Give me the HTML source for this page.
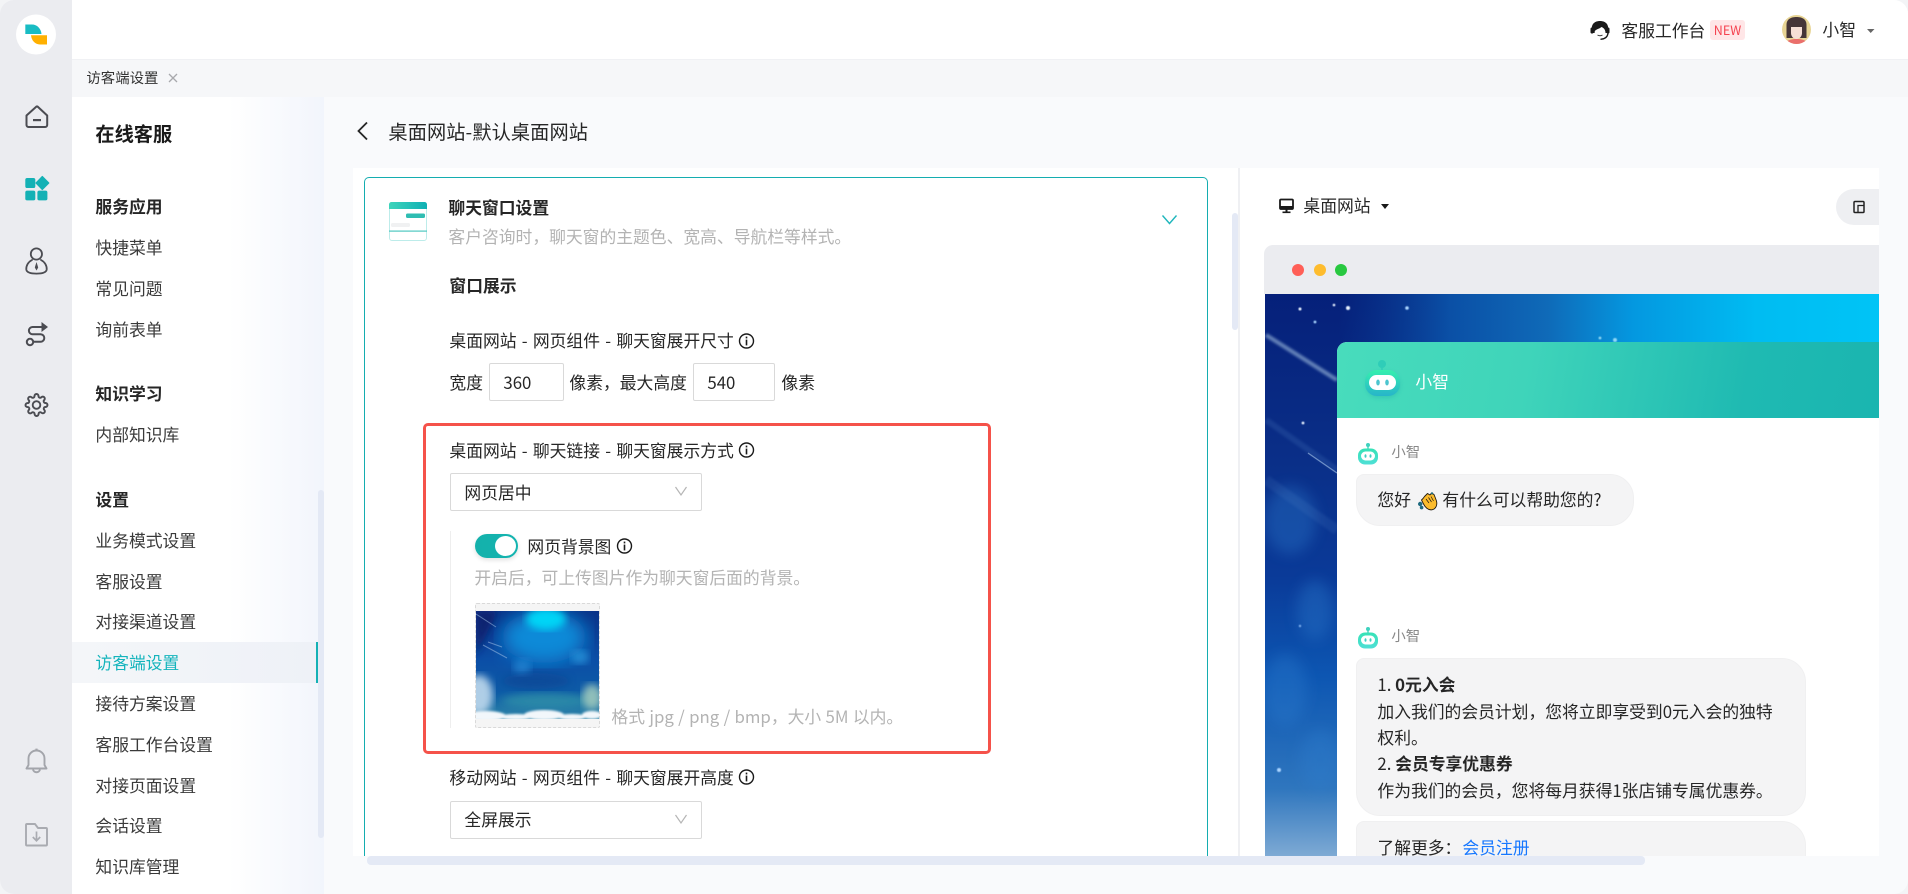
<!DOCTYPE html>
<html lang="zh-CN">
<head>
<meta charset="utf-8">
<title>访客端设置</title>
<style>
*{box-sizing:border-box;margin:0;padding:0}
html,body{width:1908px;height:894px;overflow:hidden;background:#f3f4f6}
body{font-family:"Noto Sans CJK SC","Liberation Sans",sans-serif;font-size:16.8px;color:#262626}
#app{position:absolute;left:0;top:0;width:1908px;height:894px;overflow:hidden;border-radius:14px;background:#f9fafc}
.a{position:absolute}
.t{position:absolute;white-space:nowrap;line-height:24px;height:24px;margin:-.6px 0 0 -.6px}
.w{word-spacing:1.5px}
.b{font-weight:700}
.g{color:#b3b3b3}
.s{color:#3a3a3a}
.box{position:absolute;background:#fff;border:1px solid #d9d9d9;border-radius:2px}
svg.o{position:absolute;left:0;top:0;width:1908px;height:894px;pointer-events:none}
</style>
</head>
<body>
<div id="app">
  <!-- top bar -->
  <div class="a" style="left:72px;top:0;width:1836px;height:60px;background:#fff;border-bottom:1px solid #f0f1f4"></div>
  <div class="a" style="left:72px;top:60px;width:1836px;height:37px;background:#f6f7f9"></div>
  <div class="t" style="left:87px;top:67px;font-size:14.4px;color:#333">访客端设置</div>
  <div class="t" style="left:1622px;top:19px">客服工作台</div>
  <div class="a" style="left:1710px;top:20px;width:35px;height:20px;background:#ffe6e7;border-radius:3px;color:#f5424f;font-size:12.5px;line-height:20px;text-align:center">NEW</div>
  <div class="t" style="left:1823px;top:18px">小智</div>

  <!-- rail -->
  <div class="a" style="left:0;top:0;width:72px;height:894px;background:#ebecf0"></div>

  <!-- sidebar -->
  <div class="a" style="left:72px;top:97px;width:252px;height:797px;background:linear-gradient(90deg,#fff 0,#fff 62%,#f2f5fc 100%)"></div>
  <div class="a" style="left:72px;top:642px;width:246px;height:41px;background:linear-gradient(90deg,#f4f6f9,#eef1f7)"></div>
  <div class="a" style="left:316px;top:642px;width:2px;height:41px;background:#14b1b5"></div>
  <div class="a" style="left:318px;top:490px;width:6px;height:348px;background:#e4e9f5;border-radius:3px"></div>
  <div class="t b" style="left:96px;top:122px;font-size:19.2px;color:#1a1a1a">在线客服</div>
  <div class="t b" style="left:96px;top:195px;color:#262626">服务应用</div>
  <div class="t s" style="left:96px;top:236px">快捷菜单</div>
  <div class="t s" style="left:96px;top:277px">常见问题</div>
  <div class="t s" style="left:96px;top:318px">询前表单</div>
  <div class="t b" style="left:96px;top:382px;color:#262626">知识学习</div>
  <div class="t s" style="left:96px;top:423px">内部知识库</div>
  <div class="t b" style="left:96px;top:488px;color:#262626">设置</div>
  <div class="t s" style="left:96px;top:529px">业务模式设置</div>
  <div class="t s" style="left:96px;top:570px">客服设置</div>
  <div class="t s" style="left:96px;top:610px">对接渠道设置</div>
  <div class="t" style="left:96px;top:651px;color:#14b4bc">访客端设置</div>
  <div class="t s" style="left:96px;top:692px">接待方案设置</div>
  <div class="t s" style="left:96px;top:733px">客服工作台设置</div>
  <div class="t s" style="left:96px;top:774px">对接页面设置</div>
  <div class="t s" style="left:96px;top:814px">会话设置</div>
  <div class="t s" style="left:96px;top:855px">知识库管理</div>

  <!-- main title -->
  <div class="t" style="left:389px;top:120px;font-size:19.2px;letter-spacing:.1px">桌面网站-默认桌面网站</div>

  <!-- left panel -->
  <div class="a" style="left:353px;top:168px;width:885px;height:688px;background:#fff;overflow:hidden">
    <div class="a" style="left:11px;top:9px;width:844px;height:679px;border:1.5px solid #14adb0;border-bottom:0;border-radius:5px 5px 0 0"></div>
  </div>
  <div class="a" style="left:1232px;top:213px;width:6px;height:117px;background:#e4e9f5;border-radius:3px"></div>
  <div class="a" style="left:1238px;top:168px;width:2px;height:688px;background:#eff0f3"></div>

  <div class="t b" style="left:449px;top:196px">聊天窗口设置</div>
  <div class="t g" style="left:449px;top:225px">客户咨询时，聊天窗的主题色、宽高、导航栏等样式。</div>
  <div class="t b" style="left:450px;top:274px">窗口展示</div>
  <div class="t w" style="left:450px;top:329px">桌面网站 - 网页组件 - 聊天窗展开尺寸</div>
  <div class="t" style="left:450px;top:371px">宽度</div>
  <div class="box" style="left:489px;top:363px;width:75px;height:38px"></div>
  <div class="t" style="left:504px;top:371px">360</div>
  <div class="t" style="left:570px;top:371px">像素，最大高度</div>
  <div class="box" style="left:693px;top:363px;width:82px;height:38px"></div>
  <div class="t" style="left:708px;top:371px">540</div>
  <div class="t" style="left:782px;top:371px">像素</div>

  <div class="t w" style="left:450px;top:439px">桌面网站 - 聊天链接 - 聊天窗展示方式</div>
  <div class="box" style="left:450px;top:473px;width:252px;height:38px"></div>
  <div class="t" style="left:465px;top:481px">网页居中</div>
  <div class="a" style="left:450px;top:531px;width:1px;height:197px;background:#eeeeee"></div>
  <div class="a" style="left:475px;top:534px;width:43px;height:24px;border-radius:12px;background:linear-gradient(90deg,#14b1ab,#14b4b0);box-shadow:0 2px 5px rgba(0,0,0,.12)"></div>
  <div class="a" style="left:495px;top:536px;width:21px;height:20px;border-radius:50%;background:#fff"></div>
  <div class="t" style="left:528px;top:535px">网页背景图</div>
  <div class="t g" style="left:475px;top:566px">开启后，可上传图片作为聊天窗后面的背景。</div>
  <div class="a" style="left:475px;top:603px;width:125px;height:125px;background:#f5f5f5;border:1px dashed #d9d9d9;border-radius:2px"></div>
  <svg class="a" style="left:476px;top:611px" width="123" height="108" viewBox="0 0 123 108">
    <defs>
      <linearGradient id="tb" x1="0" y1="0" x2="0" y2="1">
        <stop offset="0" stop-color="#0a3388"/>
        <stop offset=".45" stop-color="#0b4ea6"/>
        <stop offset=".75" stop-color="#0d5ba6"/>
        <stop offset="1" stop-color="#2f86a8"/>
      </linearGradient>
      <filter id="f9"><feGaussianBlur stdDeviation="9"/></filter>
      <filter id="f4"><feGaussianBlur stdDeviation="4"/></filter>
      <filter id="f1"><feGaussianBlur stdDeviation="1.1"/></filter>
    </defs>
    <rect width="123" height="108" fill="url(#tb)"/>
    <path d="M0 0H22L0 45z" fill="#07216f" filter="url(#f4)"/>
    <ellipse cx="68" cy="26" rx="42" ry="26" fill="#0a8ad8" filter="url(#f9)"/>
    <ellipse cx="70" cy="8" rx="20" ry="11" fill="#04d4f6" filter="url(#f4)"/>
    <ellipse cx="104" cy="46" rx="9" ry="7" fill="#2a96dc" opacity=".75" filter="url(#f4)"/>
    <ellipse cx="46" cy="56" rx="9" ry="8" fill="#2a90dc" opacity=".6" filter="url(#f4)"/>
    <ellipse cx="60" cy="70" rx="34" ry="8" fill="#083f8e" opacity=".5" filter="url(#f4)"/>
    <ellipse cx="70" cy="90" rx="44" ry="8" fill="#2f8fa8" opacity=".8" filter="url(#f4)"/>
    <ellipse cx="116" cy="86" rx="10" ry="13" fill="#a6cfbe" opacity=".85" filter="url(#f4)"/>
    <ellipse cx="3" cy="84" rx="14" ry="20" fill="#b8d4ea" opacity=".95" filter="url(#f4)"/>
    <g fill="#f2f7fb" filter="url(#f1)">
      <ellipse cx="10" cy="105" rx="20" ry="5"/>
      <ellipse cx="40" cy="106" rx="16" ry="3"/>
      <ellipse cx="68" cy="104" rx="20" ry="5"/>
      <ellipse cx="96" cy="106" rx="14" ry="3"/>
      <ellipse cx="116" cy="104" rx="10" ry="4"/>
    </g>
    <g stroke="#9fc0e6" stroke-width="1" opacity=".55">
      <path d="M0 3L20 16"/>
      <path d="M12 31L26 36"/>
      <path d="M7 34L31 47"/>
    </g>
  </svg>
  <div class="t g" style="left:612px;top:705px;word-spacing:.6px">格式 jpg / png / bmp，大小 5M 以内。</div>

  <div class="t w" style="left:450px;top:766px">移动网站 - 网页组件 - 聊天窗展开高度</div>
  <div class="box" style="left:450px;top:801px;width:252px;height:38px"></div>
  <div class="t" style="left:465px;top:808px">全屏展示</div>

  <!-- red box -->
  <div class="a" style="left:423px;top:423px;width:568px;height:331px;border:3.5px solid #f5524a;border-radius:5px"></div>

  <!-- right panel -->
  <div class="a" style="left:1240px;top:168px;width:639px;height:688px;background:#fff"></div>
  <div class="t" style="left:1304px;top:194px">桌面网站</div>
  <div class="a" style="left:1836px;top:189px;width:43px;height:36px;background:#eeeff2;border-radius:18px 0 0 18px"></div>
  <div class="a" style="left:1264px;top:245px;width:615px;height:49px;background:#ebecf0;border-radius:9px 0 0 0"></div>

  <svg class="a" style="left:1265px;top:294px" width="614" height="562" viewBox="1265 294 614 562">
    <defs>
      <linearGradient id="v" x1="0" y1="0" x2="0" y2="1">
        <stop offset="0" stop-color="#05207a"/>
        <stop offset=".3" stop-color="#0a2f88"/>
        <stop offset=".5" stop-color="#0a3a98"/>
        <stop offset=".68" stop-color="#0d56b2"/>
        <stop offset=".88" stop-color="#2f76be"/>
        <stop offset="1" stop-color="#7eaad4"/>
      </linearGradient>
      <linearGradient id="h" x1="0" y1="0" x2="1" y2="0">
        <stop offset="0" stop-color="#0a4aa0" stop-opacity="0"/>
        <stop offset=".12" stop-color="#0a3f98" stop-opacity="0"/>
        <stop offset=".3" stop-color="#0b52a8" stop-opacity=".95"/>
        <stop offset=".46" stop-color="#0f6ab8"/>
        <stop offset=".6" stop-color="#0498e0"/>
        <stop offset=".8" stop-color="#00bcf2"/>
        <stop offset="1" stop-color="#00c4f6"/>
      </linearGradient>
      <filter id="bl"><feGaussianBlur stdDeviation="1.2"/></filter>
      <filter id="bl2"><feGaussianBlur stdDeviation="7"/></filter>
      <filter id="bl3"><feGaussianBlur stdDeviation=".5"/></filter>
    </defs>
    <rect x="1265" y="294" width="614" height="562" fill="url(#v)"/>
    <rect x="1265" y="294" width="614" height="48" fill="url(#h)"/>
    <g filter="url(#bl2)" fill="#2f7fd0" opacity=".35">
      <ellipse cx="1290" cy="520" rx="26" ry="34"/>
      <ellipse cx="1315" cy="610" rx="18" ry="30"/>
      <ellipse cx="1285" cy="690" rx="22" ry="36"/>
      <ellipse cx="1320" cy="760" rx="20" ry="30"/>
    </g>
    <path d="M1266 335L1337 380" stroke="#8aa8d0" stroke-width="4" opacity=".7" filter="url(#bl)"/>
    <path d="M1308 453L1337 473" stroke="#a8c4e8" stroke-width="1.2" opacity=".65"/>
    <path d="M1266 420L1337 470" stroke="#5c8ccc" stroke-width="6" opacity=".18" filter="url(#bl)"/>
    <path d="M1266 480L1337 530" stroke="#5c8ccc" stroke-width="10" opacity=".14" filter="url(#bl)"/>
    <g fill="#e8f2ff" filter="url(#bl3)">
      <circle cx="1300" cy="309" r="1.5"/><circle cx="1334" cy="305" r="1.3"/><circle cx="1348" cy="308" r="2"/>
      <circle cx="1407" cy="308" r="1.8" fill="#a9d4ff"/><circle cx="1315" cy="322" r="1.4" fill="#a9d4ff"/>
      <circle cx="1303" cy="423" r="1.4"/>
      <circle cx="1279" cy="770" r="2" fill="#a9d4ff"/>
      <circle cx="1300" cy="626" r="1.2" fill="#7fb0f0"/>
      <circle cx="1600" cy="338" r="1.4" fill="#8fd8f4"/><circle cx="1615" cy="340" r="2" fill="#8fd8f4"/>
    </g>
  </svg>

  <!-- chat -->
  <div class="a" style="left:1337px;top:342px;width:542px;height:514px;background:#fff;border-radius:10px 0 0 0;overflow:hidden">
    <div class="a" style="left:0;top:0;width:542px;height:76px;background:linear-gradient(100deg,#48dcbc 0,#3fd4ba 35%,#1fbab2 75%,#1ab5b0 100%)"></div>
    <div class="a" style="left:19px;top:132px;width:278px;height:52px;background:#f4f4f5;border:1px solid #f0f0f1;border-radius:8px 24px 24px 24px"></div>
    <div class="a" style="left:19px;top:316px;width:450px;height:158px;background:#f4f4f5;border:1px solid #f0f0f1;border-radius:8px 24px 24px 24px"></div>
    <div class="a" style="left:19px;top:479px;width:450px;height:35px;background:#f4f4f5;border:1px solid #f0f0f1;border-bottom:0;border-radius:8px 24px 0 0"></div>
  </div>
  <div class="t" style="left:1416px;top:370px;color:#fff">小智</div>
  <div class="t" style="left:1392px;top:441px;font-size:14.4px;color:#888">小智</div>
  <div class="t" style="left:1378px;top:488px">您好</div>
  <div class="t" style="left:1443px;top:488px">有什么可以帮助您的?</div>
  <div class="t" style="left:1392px;top:625px;font-size:14.4px;color:#888">小智</div>
  <div class="t" style="left:1378px;top:673px"><span>1. </span><b>0元入会</b></div>
  <div class="t" style="left:1378px;top:700px">加入我们的会员计划，您将立即享受到0元入会的独特</div>
  <div class="t" style="left:1378px;top:726px">权利。</div>
  <div class="t" style="left:1378px;top:752px"><span>2. </span><b>会员专享优惠券</b></div>
  <div class="t" style="left:1378px;top:779px">作为我们的会员，您将每月获得1张店铺专属优惠券。</div>
  <div class="a" style="left:1340px;top:836px;width:510px;height:20px;overflow:hidden">
    <div class="t" style="left:38px;top:0">了解更多：</div>
    <div class="t" style="left:123px;top:0;color:#1677ff">会员注册</div>
  </div>

  <div class="a" style="left:367px;top:856px;width:1278px;height:9px;background:#e4e9f5;border-radius:4px"></div>

  <!-- icons -->
  <svg class="o" viewBox="0 0 1908 894" fill="none">
    <defs>
      <g id="info">
        <circle cx="8" cy="8" r="7" stroke="#1a1a1a" stroke-width="1.4" fill="#fff"/>
        <rect x="7.2" y="3.6" width="1.6" height="1.8" fill="#1a1a1a"/>
        <rect x="7.2" y="6.6" width="1.6" height="5.8" fill="#1a1a1a"/>
      </g>
      <g id="bot">
        <circle cx="10" cy="2.5" r="2" fill="#3fd2bf"/>
        <rect x="9.3" y="3" width="1.4" height="4" fill="#3fd2bf"/>
        <rect x="0" y="6" width="20" height="16" rx="7" fill="url(#bg1)"/>
        <rect x="3" y="9" width="14" height="9" rx="4.5" fill="#fff"/>
        <ellipse cx="7.5" cy="13.5" rx="1" ry="1.8" fill="#3fcfc4"/>
        <ellipse cx="12.5" cy="13.5" rx="1" ry="1.8" fill="#3fcfc4"/>
      </g>
      <linearGradient id="bg1" x1="0" y1="0" x2="0" y2="1"><stop offset="0" stop-color="#36e2b6"/><stop offset="1" stop-color="#4fdfd6"/></linearGradient>
      <linearGradient id="bg2" x1="0" y1="0" x2="0" y2="1"><stop offset="0" stop-color="#36f0ae"/><stop offset="1" stop-color="#27b4ca"/></linearGradient>
      <linearGradient id="ci" x1="0" y1="0" x2="1" y2="0"><stop offset="0" stop-color="#3ed4bb"/><stop offset="1" stop-color="#0fb0b4"/></linearGradient>
      <filter id="sh" x="-30%" y="-30%" width="160%" height="160%"><feGaussianBlur stdDeviation="2"/></filter>
    </defs>

    <!-- logo -->
    <circle cx="36" cy="34.5" r="20" fill="#fff"/>
    <path d="M25.3 24.5H32C37 24.5 41 28.5 41.5 34H25.3z" fill="#19bcc3"/>
    <path d="M31 35.3H47V44.5H40C35 44.5 31.5 40.5 31 35.3z" fill="#ffb000"/>

    <!-- home -->
    <path d="M26.5 115.5L36.5 106.5Q37 106.2 37.5 106.5L47.2 115.5V125a2 2 0 0 1-2 2H28.5a2 2 0 0 1-2-2z" stroke="#4b4c52" stroke-width="2" stroke-linejoin="round"/>
    <rect x="33" y="119" width="8" height="2.2" fill="#4b4c52"/>
    <!-- apps -->
    <rect x="25.3" y="178" width="10" height="10" rx="1.8" fill="#14b1b5"/>
    <path d="M42.3 176.4L48.9 183L42.3 189.6L35.9 183z" fill="#14b1b5" stroke="#14b1b5" stroke-linejoin="round"/>
    <rect x="25.3" y="190.6" width="10" height="9.8" rx="1.8" fill="#14b1b5"/>
    <rect x="37.4" y="190.6" width="10" height="9.8" rx="1.8" fill="#14b1b5"/>
    <!-- person -->
    <circle cx="36.4" cy="254" r="5.6" stroke="#4b4c52" stroke-width="1.8"/>
    <path d="M32 260C28 262 26 266 26.3 269.5C26.8 273 33 273.6 36.5 273.6C40 273.6 46.2 273 46.7 269.5C47 266 45 262 41 260" stroke="#4b4c52" stroke-width="1.8" stroke-linecap="round"/>
    <path d="M36.5 262L38.2 267.5L36.5 270.5L34.8 267.5z" fill="#4b4c52"/>
    <!-- route -->
    <path d="M42 327H32.5a3.6 3.6 0 0 0 0 7.2H40.5a3.8 3.8 0 0 1 0 7.6H34" stroke="#4b4c52" stroke-width="2"/>
    <path d="M41.5 322L48 327L41.5 332z" fill="#4b4c52"/>
    <circle cx="30" cy="342" r="3.2" stroke="#4b4c52" stroke-width="2"/>
    <!-- gear -->
    <g transform="translate(24.5 393)" stroke="#4b4c52" stroke-width="1.9">
      <circle cx="12" cy="12" r="3.8"/>
      <path d="M19.4 15a1.65 1.65 0 0 0 .33 1.82l.06.06a2 2 0 0 1 0 2.83 2 2 0 0 1-2.83 0l-.06-.06a1.65 1.65 0 0 0-1.82-.33 1.65 1.65 0 0 0-1 1.51V21a2 2 0 0 1-2 2 2 2 0 0 1-2-2v-.09A1.65 1.65 0 0 0 9 19.4a1.65 1.65 0 0 0-1.82.33l-.06.06a2 2 0 0 1-2.83 0 2 2 0 0 1 0-2.83l.06-.06a1.65 1.65 0 0 0 .33-1.82 1.65 1.65 0 0 0-1.51-1H3a2 2 0 0 1-2-2 2 2 0 0 1 2-2h.09A1.65 1.65 0 0 0 4.6 9a1.65 1.65 0 0 0-.33-1.82l-.06-.06a2 2 0 0 1 0-2.83 2 2 0 0 1 2.83 0l.06.06a1.65 1.65 0 0 0 1.82.33H9a1.65 1.65 0 0 0 1-1.51V3a2 2 0 0 1 2-2 2 2 0 0 1 2 2v.09a1.65 1.65 0 0 0 1 1.51 1.65 1.65 0 0 0 1.82-.33l.06-.06a2 2 0 0 1 2.83 0 2 2 0 0 1 0 2.83l-.06.06a1.65 1.65 0 0 0-.33 1.82V9a1.65 1.65 0 0 0 1.51 1H21a2 2 0 0 1 2 2 2 2 0 0 1-2 2h-.09a1.65 1.65 0 0 0-1.51 1z"/>
    </g>
    <!-- bell -->
    <path d="M36.5 750.5a8 8 0 0 0-8 8V765l-2 3.5H46.5l-2-3.5v-6.5a8 8 0 0 0-8-8z" stroke="#a3a5ab" stroke-width="1.9" stroke-linejoin="round"/>
    <path d="M33 769.5a3.6 3.6 0 0 0 7 0" stroke="#a3a5ab" stroke-width="1.9"/>
    <rect x="35.4" y="748.6" width="2.2" height="2.6" fill="#a3a5ab"/>
    <!-- folder -->
    <path d="M26 825a1 1 0 0 1 1-1H35L38 828H46a1 1 0 0 1 1 1V844.5a1 1 0 0 1-1 1H27a1 1 0 0 1-1-1z" stroke="#a9abb1" stroke-width="1.9" stroke-linejoin="round"/>
    <path d="M36.5 831.5V840.5M32.8 837L36.5 840.8L40.2 837" stroke="#a9abb1" stroke-width="1.7"/>

    <!-- tab close -->
    <path d="M169 74L177 82M177 74L169 82" stroke="#a8a9ad" stroke-width="1.3"/>

    <!-- headset agent -->
    <path d="M1592.5 33C1590 25 1594 21 1600 21C1606 21 1610 25 1607.5 33L1605.5 33C1605.5 30 1604 28 1601.5 27C1599 29 1596.5 29 1594.8 31L1594.6 33z" fill="#1a1a1a"/>
    <rect x="1590.5" y="27.5" width="3" height="6" rx="1.4" fill="#1a1a1a"/>
    <rect x="1606.5" y="27.5" width="3" height="6" rx="1.4" fill="#1a1a1a"/>
    <path d="M1597.5 35Q1600 36.6 1602.5 35" stroke="#333" stroke-width="1"/>
    <path d="M1608 33.5Q1607 39 1600.5 39.3" stroke="#1a1a1a" stroke-width="1.3"/>
    <!-- avatar -->
    <circle cx="1796.5" cy="29.5" r="14.5" fill="#e8d595"/>
    <clipPath id="av"><circle cx="1796.5" cy="29.5" r="14.5"/></clipPath>
    <g clip-path="url(#av)">
      <path d="M1786.5 38V25C1786.5 19 1791 17 1796.5 17C1802 17 1806.5 19 1806.5 25V38z" fill="#463638"/>
      <path d="M1791 27H1802V33C1802 36.5 1799.5 39 1796.5 39C1793.5 39 1791 36.5 1791 33z" fill="#f6dfd6"/>
      <path d="M1785 45C1785 40.5 1791 39 1796.5 39C1802 39 1808 40.5 1808 45z" fill="#ea6f6c"/>
    </g>
    <path d="M1867 29H1874.5L1870.7 33z" fill="#666"/>

    <!-- back -->
    <path d="M367 122.5L358.5 131L367 139.5" stroke="#262626" stroke-width="1.8"/>

    <!-- card icon -->
    <rect x="389.5" y="202.5" width="37" height="38" rx="2.5" fill="#fff" stroke="#bdecea"/>
    <path d="M389 209V204.5a2.5 2.5 0 0 1 2.5-2.5H424.5a2.5 2.5 0 0 1 2.5 2.5V209z" fill="url(#ci)"/>
    <rect x="406" y="213.5" width="19" height="4.5" rx="1.5" fill="#2ebdb2"/>
    <rect x="391" y="223" width="19" height="4" rx="1.5" fill="#f0f1f2"/>
    <rect x="389" y="230.5" width="38" height="1.2" fill="#4fc8c0"/>
    <!-- card chevron -->
    <path d="M1162.5 215.5L1169.5 223.5L1176.5 215.5" stroke="#1fb6bc" stroke-width="1.4"/>

    <!-- info icons -->
    <use href="#info" x="738.5" y="333"/>
    <use href="#info" x="738.5" y="442"/>
    <use href="#info" x="616.5" y="538"/>
    <use href="#info" x="738.5" y="769"/>

    <!-- select chevrons -->
    <path d="M675.5 487L681 495L686.5 487" stroke="#b5b5b5" stroke-width="1.2"/>
    <path d="M675.5 815L681 823L686.5 815" stroke="#b5b5b5" stroke-width="1.2"/>

    <!-- device icon -->
    <rect x="1280" y="199.5" width="13" height="9.5" rx="1" stroke="#1a1a1a" stroke-width="1.8"/>
    <rect x="1280" y="206" width="13" height="3.6" fill="#1a1a1a"/>
    <rect x="1285.5" y="209" width="2" height="3" fill="#1a1a1a"/>
    <rect x="1282.5" y="211.5" width="8" height="1.6" fill="#1a1a1a"/>
    <path d="M1381 204H1389L1385 209z" fill="#1a1a1a"/>
    <!-- button icon -->
    <rect x="1854" y="201.5" width="10" height="11" rx="1" stroke="#222" stroke-width="1.5"/>
    <path d="M1858 212V205.5H1864" stroke="#222" stroke-width="1.3"/>

    <!-- dots -->
    <circle cx="1298" cy="270" r="6" fill="#ff5f57"/>
    <circle cx="1320" cy="270" r="6" fill="#febc2e"/>
    <circle cx="1341" cy="270" r="6" fill="#28c840"/>

    <!-- header bot -->
    <rect x="1366" y="372" width="34" height="26" rx="12" fill="#1aa8a8" opacity=".35" filter="url(#sh)"/>
    <circle cx="1382" cy="364" r="4" fill="#2fcdb8"/>
    <rect x="1381.3" y="366" width="1.4" height="5" fill="#2fcdb8"/>
    <rect x="1365" y="370" width="35" height="26" rx="12" fill="url(#bg2)"/>
    <rect x="1369" y="375" width="27" height="15" rx="7.5" fill="#fff"/>
    <ellipse cx="1378" cy="382.5" rx="1.8" ry="3" fill="#4cc5cf"/>
    <ellipse cx="1387" cy="382.5" rx="1.8" ry="3" fill="#4cc5cf"/>
    <use href="#bot" x="1358" y="442.5"/>
    <use href="#bot" x="1358" y="626.5"/>

    <!-- clap emoji -->
    <g transform="translate(1418 492)">
      <path d="M6.5 4.5L9.5 1.5L12 3L13.5 1L16 2.5L17 5L18.5 9C19.5 13 18 17 14 17.8C10 18.4 7 15 5.5 12L3.5 8L5 6.5z" fill="#fbbb2c" stroke="#1f1a10" stroke-width=".9" stroke-linejoin="round"/>
      <circle cx="2.2" cy="12" r="2.2" fill="#1f6a80"/>
      <circle cx="3.6" cy="15.6" r="1.8" fill="#1f6a80"/>
      <circle cx="14" cy="1.4" r="1.2" fill="#1f6a80"/>
      <path d="M8 7L11 11M10.5 5.5L13.5 10M13 4.5L15.5 9" stroke="#1f1a10" stroke-width=".7"/>
    </g>
  </svg>
</div>
</body>
</html>
